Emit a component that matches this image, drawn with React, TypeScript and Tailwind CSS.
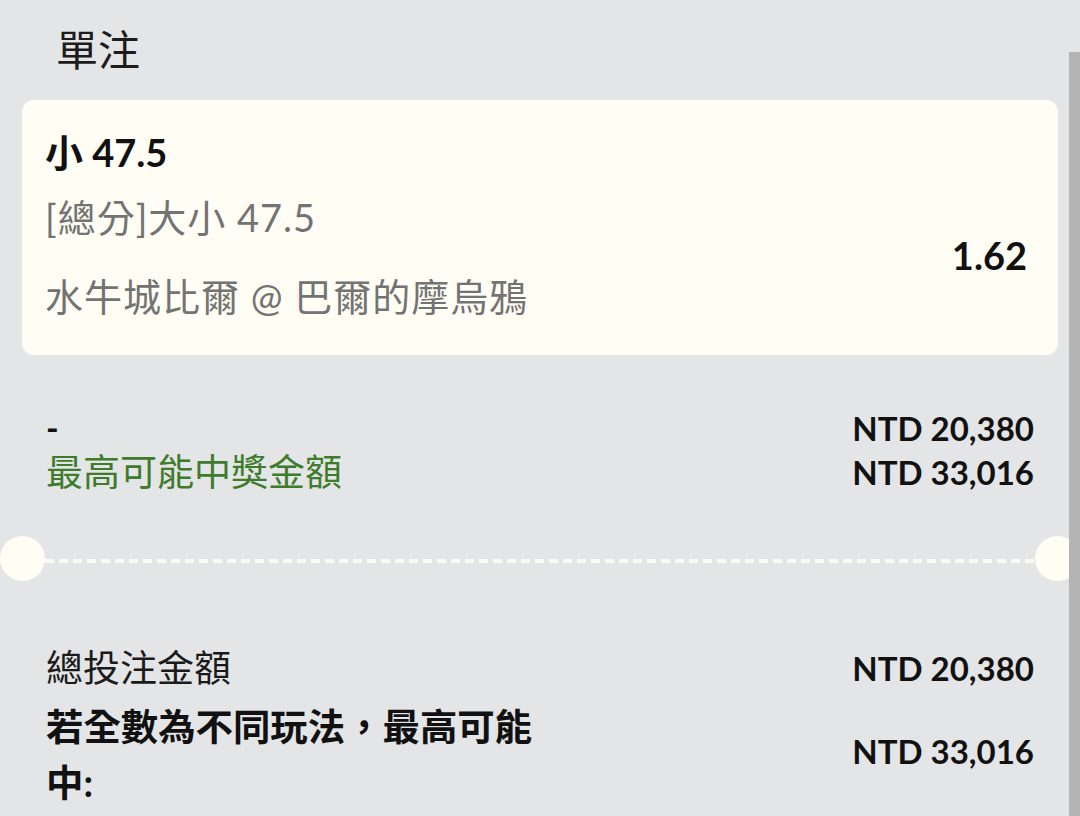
import React from "react";

const FONT = 'Lato, "Noto Sans CJK TC", "Noto Sans", sans-serif';

export default function App() {
  return (
    <div
      className="relative w-[1080px] h-[816px] overflow-hidden bg-[#e4e5e7]"
      style={{ fontFamily: FONT }}
    >
      {/* Header */}
      <div className="h-[100px] flex items-center pl-[56px]">
        <span className="text-[42px] leading-[50px] text-[#1c1c1c]">單注</span>
      </div>

      {/* Selection card */}
      <div className="mx-[22px] h-[255px] rounded-[12px] bg-[#fffdf4] pl-[23px] pr-[31px] pt-[27px]">
        <div className="text-[38px] leading-[50px] font-bold text-[#111111]">小 47.5</div>
        <div className="mt-[16px] flex items-center justify-between">
          <div className="text-[38px] tracking-[1px] text-[#737373]">
            <div className="leading-[48px]">[總分]大小 47.5</div>
            <div className="leading-[48px] mt-[31px]">水牛城比爾 @ 巴爾的摩烏鴉</div>
          </div>
          <div className="text-[38px] font-bold text-[#111111] leading-[48px] mb-[4px]">1.62</div>
        </div>
      </div>

      {/* Stake rows */}
      <div className="px-[46px] mt-[51px]">
        <div className="flex items-center justify-between h-[44px]">
          <span className="text-[34px] font-bold text-[#111111] leading-[44px]">-</span>
          <span className="text-[33px] font-bold text-[#111111] leading-[44px]">NTD 20,380</span>
        </div>
        <div className="flex items-center justify-between h-[44px]">
          <span className="text-[37px] text-[#3e7c2c] leading-[44px]">最高可能中獎金額</span>
          <span className="text-[33px] font-bold text-[#111111] leading-[44px]">NTD 33,016</span>
        </div>
      </div>

      {/* Ticket separator */}
      <div className="mt-[42px] flex items-center h-[45px]">
        <div className="w-[45px] h-[45px] rounded-full bg-[#fffdf4] shrink-0" />
        <div className="flex-1 h-[4px] mt-[5px] bg-[repeating-linear-gradient(90deg,#fbfaf3_0px,#fbfaf3_9px,transparent_9px,transparent_14px)]" />
        <div className="w-[45px] h-[45px] rounded-full bg-[#fffdf4] shrink-0" />
      </div>

      {/* Totals */}
      <div className="px-[46px] mt-[63px]">
        <div className="flex items-center justify-between h-[48px]">
          <span className="text-[37px] text-[#1a1a1a] leading-[48px]">總投注金額</span>
          <span className="text-[33px] font-bold text-[#111111] leading-[48px]">NTD 20,380</span>
        </div>
        <div className="mt-[7px] flex items-center justify-between">
          <div className="w-[500px] text-[37.4px] font-bold text-[#111111] leading-[56px]">
            若全數為不同玩法，最高可能中:
          </div>
          <span className="text-[33px] font-bold text-[#111111] leading-[48px] mb-[8px]">NTD 33,016</span>
        </div>
      </div>

      {/* Scrollbar overlay */}
      <div className="absolute right-0 top-[52px] bottom-0 w-[11px] bg-[#b4b4b4]" />
    </div>
  );
}
